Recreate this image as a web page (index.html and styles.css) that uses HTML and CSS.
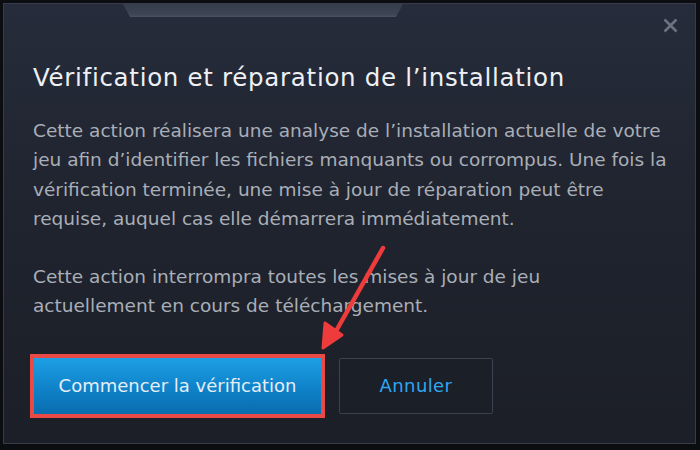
FILE: index.html
```html
<!DOCTYPE html>
<html lang="fr">
<head>
    <meta charset="UTF-8">
    <title>Vérification et réparation</title>
    <link rel="stylesheet" href="styles.css">
</head>
<body>

<div class="dialog">
    <div class="tab"></div>
    <button class="close" aria-label="Fermer">
        <svg width="15" height="15" viewBox="0 0 15 15"><path d="M1.5 1.5L13.5 13.5M13.5 1.5L1.5 13.5" stroke="#6d7380" stroke-width="2.5" fill="none"/></svg>
    </button>

    <h1 class="title">Vérification et réparation de l’installation</h1>
    <p class="text">Cette action réalisera une analyse de l’installation actuelle de votre jeu afin d’identifier les fichiers manquants ou corrompus. Une fois la vérification terminée, une mise à jour de réparation peut être requise, auquel cas elle démarrera immédiatement.</p>
    <p class="text">Cette action interrompra toutes les mises à jour de jeu<br>actuellement en cours de téléchargement.</p>

    <div class="actions">
        <div class="highlight">
            <button class="btn btn-primary">Commencer la vérification</button>
        </div>
        <button class="btn btn-cancel">Annuler</button>
    </div>

    <!-- red annotation arrow -->
    <svg class="arrow" width="80" height="120" viewBox="0 0 80 120">
        <path d="M62 4L10 96" stroke="#ee3b3b" stroke-width="4.5" stroke-linecap="round" fill="none"/>
        <path d="M2 104L4 79L21 91Z" fill="#ee3b3b" stroke="#ee3b3b" stroke-width="3" stroke-linejoin="round"/>
    </svg>
</div>

</body>
</html>
```

FILE: styles.css
```css
body {
    margin: 0;
    background-color: #0c0d11;
    font-family: "DejaVu Sans", sans-serif;
}
.dialog {
    position: relative;
    margin: 3px 4px 0 3px;
    height: 441px;
    box-sizing: border-box;
    border: 1px solid #363c4a;
    padding: 0 0 0 29px;
    background: linear-gradient(180deg, #262c3b 0%, #20242f 45%, #1c1f27 100%);
}
.tab {
    margin-left: 90px;
    width: 280px;
    height: 13px;
    background: linear-gradient(180deg, #353c4b 0%, #3e4656 80%, #4a5262 100%);
    clip-path: polygon(0 0, 100% 0, 97.5% 100%, 2.5% 100%);
}
.close {
    position: absolute;
    top: 14px;
    right: 17px;
    padding: 0;
    border: none;
    background: none;
}
.title {
    margin: 45px 0 0 0;
    font-size: 24.5px;
    font-weight: normal;
    line-height: 32px;
    letter-spacing: 0.7px;
    color: #eef0f4;
}
.text {
    margin: 22px 0 0 0;
    width: 640px;
    font-size: 18.5px;
    line-height: 29.3px;
    color: #a9aeb7;
}
.text + .text {
    margin-top: 29px;
}
.actions {
    display: flex;
    align-items: center;
    gap: 14px;
    margin-top: 33px;
    margin-left: -3px;
}
.highlight {
    border: 4px solid #ea4a46;
}
.btn {
    display: block;
    font-family: "DejaVu Sans", sans-serif;
    font-size: 18px;
    cursor: pointer;
}
.btn-primary {
    width: 287px;
    height: 56px;
    border: none;
    color: #e6eef7;
    background: linear-gradient(180deg, #1d9fe4 0%, #0f82c9 55%, #0a6cae 100%);
}
.btn-cancel {
    width: 154px;
    height: 56px;
    border: 1px solid #3b414f;
    border-radius: 2px;
    color: #2ea6f2;
    letter-spacing: 0.4px;
    background-color: #1b1f28;
}
.arrow {
    position: absolute;
    left: 317px;
    top: 240px;
}
```
